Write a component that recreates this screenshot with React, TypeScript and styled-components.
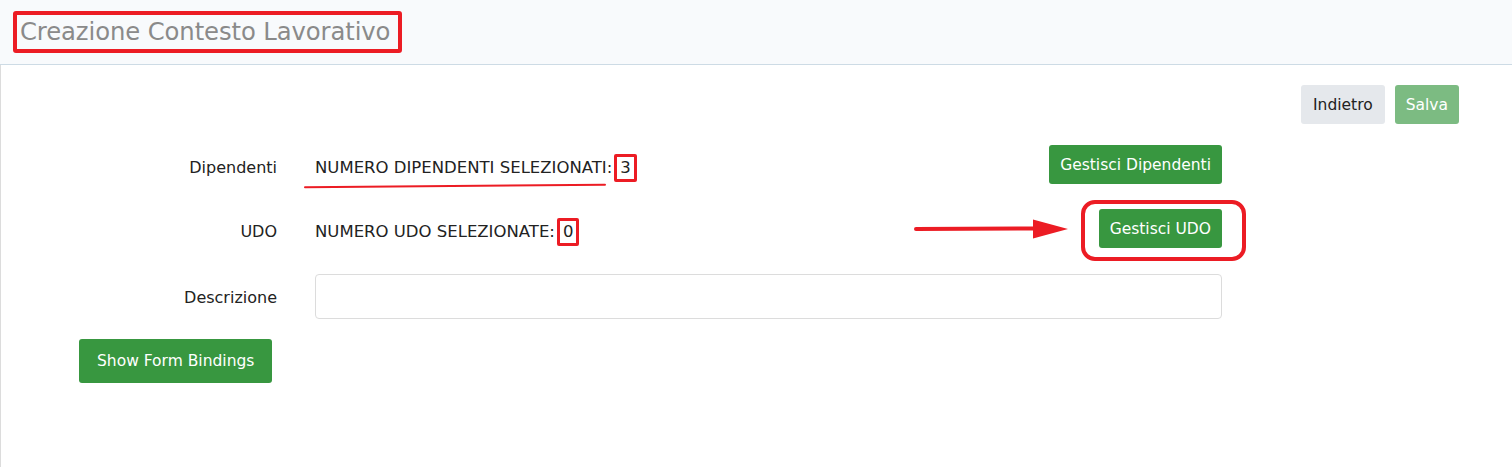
import React from "react";
import styled, { createGlobalStyle } from "styled-components";

const Global = createGlobalStyle`
  html, body { margin: 0; padding: 0; background: #ffffff; }
  body { font-family: "DejaVu Sans", "Liberation Sans", sans-serif; color: #222; }
  * { box-sizing: border-box; }
`;

const Page = styled.div`
  min-height: 467px;
  border-left: 1px solid #dcdcdc;
`;

const Header = styled.header`
  height: 65px;
  background: #f8fafc;
  border-bottom: 1px solid #cddbe5;
  display: flex;
  align-items: center;
  padding-left: 20px;
  margin-left: -1px;
`;

const Title = styled.h1`
  position: relative;
  margin: 0;
  font-size: 24.3px;
  font-weight: normal;
  color: #8a8a8a;
  line-height: 30px;
  letter-spacing: -0.1px;
  &::after {
    content: "";
    position: absolute;
    left: -7px;
    right: -12px;
    top: -6px;
    bottom: -6px;
    border: 4px solid #ec1c24;
    border-radius: 3px;
  }
`;

const Body = styled.main`
  padding: 20px 53px 0 78px;
`;

const Actions = styled.div`
  display: flex;
  justify-content: flex-end;
  gap: 10px;
`;

const Button = styled.button<{ $variant?: "light" | "green" | "pale"; $h?: number; $px?: number }>`
  font-family: inherit;
  font-size: 15.5px;
  height: ${(p) => p.$h ?? 39}px;
  padding: 0 ${(p) => p.$px ?? 11}px;
  border: none;
  border-radius: 3px;
  cursor: pointer;
  white-space: nowrap;
  color: ${(p) => (p.$variant === "light" ? "#222" : "#fff")};
  background: ${(p) =>
    p.$variant === "light" ? "#e5e8ec" : p.$variant === "pale" ? "#7cbb82" : "#389740"};
`;

const Form = styled.div`
  margin-top: 21px;
  display: flex;
  flex-direction: column;
`;

const Row = styled.div<{ $mt?: number; $h?: number }>`
  position: relative;
  display: flex;
  align-items: center;
  height: ${(p) => p.$h ?? 39}px;
  margin-top: ${(p) => p.$mt ?? 0}px;
  width: 1143px;
`;

const Label = styled.div<{ $dy?: number }>`
  width: 198px;
  text-align: right;
  font-size: 16px;
  flex-shrink: 0;
  margin-right: 38px;
  padding-top: ${(p) => p.$dy ?? 6}px;
`;

const Value = styled.div`
  flex: 1;
  display: flex;
  align-items: center;
  font-size: 16.5px;
  line-height: 19px;
  white-space: nowrap;
  padding-top: 6px;
`;

const Count = styled.span`
  display: inline-block;
  margin-left: 2px;
  padding: 1px 3px;
  border: 3px solid #ec1c24;
  border-radius: 2px;
  line-height: 20px;
`;

const Underlined = styled.span`
  position: relative;
  display: inline-flex;
  align-items: center;
`;

const Stroke = styled.svg`
  position: absolute;
  left: -10px;
  top: 26px;
  overflow: visible;
`;

const Arrow = styled.svg`
  position: absolute;
  left: 836px;
  top: 10px;
  overflow: visible;
`;

const Push = styled.div`
  margin-left: auto;
`;

const Highlight = styled.div`
  position: relative;
  margin-left: auto;
  &::after {
    content: "";
    position: absolute;
    left: -18px;
    right: -24px;
    top: -9px;
    bottom: -13px;
    border: 4px solid #ec1c24;
    border-radius: 14px;
    pointer-events: none;
  }
`;

const Input = styled.input`
  flex: 1;
  height: 45px;
  border: 1px solid #dcdcdc;
  border-radius: 4px;
  font-family: inherit;
  font-size: 16px;
  padding: 0 10px;
  outline: none;
`;

const Footer = styled.div`
  margin-top: 20px;
`;

export default function App() {
  return (
    <>
      <Global />
      <Page>
        <Header>
          <Title>Creazione Contesto Lavorativo</Title>
        </Header>
        <Body>
          <Actions>
            <Button $variant="light" $px={12}>Indietro</Button>
            <Button $variant="pale">Salva</Button>
          </Actions>
          <Form>
            <Row>
              <Label>Dipendenti</Label>
              <Value>
                <Underlined>
                  NUMERO DIPENDENTI SELEZIONATI:
                  <Stroke width="300" height="6" viewBox="0 0 300 6">
                    <path d="M0 3.2 Q150 2.6 300 0.8" stroke="#ec1c24" strokeWidth="2" fill="none" strokeLinecap="round" />
                  </Stroke>
                </Underlined>
                <Count>3</Count>
              </Value>
              <Push>
                <Button $variant="green">Gestisci Dipendenti</Button>
              </Push>
            </Row>
            <Row $mt={25}>
              <Label>UDO</Label>
              <Value>
                NUMERO UDO SELEZIONATE:<Count>0</Count>
              </Value>
              <Arrow width="154" height="20" viewBox="0 0 154 20">
                <path d="M1 10 L122 9.5" stroke="#ec1c24" strokeWidth="4" strokeLinecap="round" fill="none" />
                <path d="M118 0.5 L153 10 L118 19.5 Z" fill="#ec1c24" />
              </Arrow>
              <Highlight>
                <Button $variant="green">Gestisci UDO</Button>
              </Highlight>
            </Row>
            <Row $mt={26} $h={45}>
              <Label $dy={2}>Descrizione</Label>
              <Input />
            </Row>
          </Form>
          <Footer>
            <Button $variant="green" $h={44} $px={18}>Show Form Bindings</Button>
          </Footer>
        </Body>
      </Page>
    </>
  );
}
